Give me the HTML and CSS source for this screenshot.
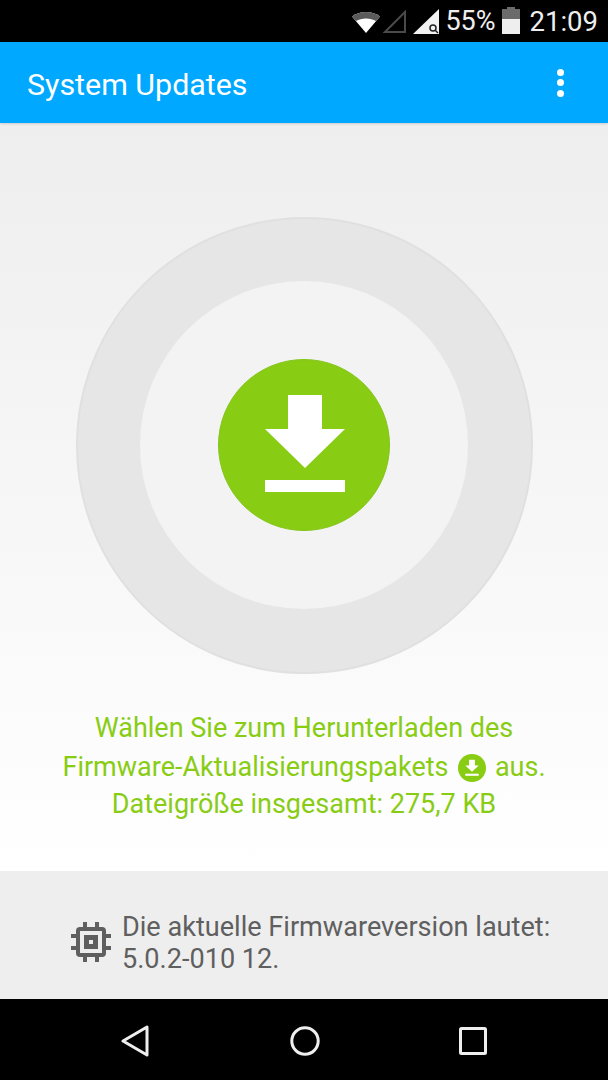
FILE: index.html
```html
<!DOCTYPE html>
<html lang="de">
<head>
<meta charset="utf-8">
<title>System Updates</title>
<link rel="stylesheet" href="styles.css">
</head>
<body>
<div class="screen">
  <header class="status">
    <svg class="ico-wifi" width="30" height="26" viewBox="0 0 30 26"><path d="M1 7.500C8 1.500 22 1.500 29 7.500L15 24Z" fill="#fff"/><path d="M1 7.500C8 1.500 22 1.500 29 7.500L25 12C19.500 8.500 10.500 8.500 5 12Z" fill="#5a5a5a"/></svg>
    <svg class="ico-sig1" width="24" height="26" viewBox="0 0 24 26"><path d="M22 3V23H2Z" fill="none" stroke="#4a4a4a" stroke-width="2"/></svg>
    <svg class="ico-sig2" width="28" height="28" viewBox="0 0 28 28"><path d="M27 1V26H1Z" fill="#f2f2f2"/><circle cx="21" cy="20" r="3" fill="none" stroke="#222" stroke-width="1.500"/><path d="M23 22L26 25" stroke="#222" stroke-width="1.500"/></svg>
    <span class="pct">55%</span>
    <svg class="ico-bat" width="18" height="27" viewBox="0 0 18 27"><path d="M5 0H13V2H18V12H0V2H5Z" fill="#6b6b6b"/><rect y="12" width="18" height="15" fill="#eee"/></svg>
    <span class="clock">21:09</span>
  </header>
  <div class="appbar">
    <h1 class="title">System Updates</h1>
    <div class="more"><i></i><i></i><i></i></div>
  </div>
  <main class="main">
    <div class="ring">
      <div class="hole">
        <div class="btn">
          <svg width="172" height="172" viewBox="0 0 172 172"><path d="M70 36H104V70H127L87 109L47 70H70Z" fill="#fff"/><rect x="47" y="121" width="80" height="12" fill="#fff"/></svg>
        </div>
      </div>
    </div>
    <p class="msg">
      <span class="line line-first">Wählen Sie zum Herunterladen des</span>
      <span class="line line-mid">Firmware-Aktualisierungspakets <svg class="mini" width="28" height="28" viewBox="0 0 172 172"><circle cx="86" cy="86" r="86" fill="#88cc14"/><path d="M68 36H104V70H127L86 109L45 70H68Z" fill="#fff"/><rect x="45" y="121" width="82" height="13" fill="#fff"/></svg> aus.</span>
      <span class="line">Dateigröße insgesamt: 275,7 KB</span>
    </p>
  </main>
  <section class="info">
    <svg class="chip" width="42" height="42" viewBox="0 0 42 42"><g fill="#5f5f5f"><rect x="13" y="1" width="4" height="40"/><rect x="25" y="1" width="4" height="40"/><rect x="1" y="13" width="40" height="4"/><rect x="1" y="25" width="40" height="4"/></g><rect x="6" y="6" width="30" height="30" rx="4" fill="#5f5f5f"/><rect x="10" y="10" width="22" height="22" fill="#eee"/><rect x="14" y="14" width="14" height="14" fill="#5f5f5f"/><rect x="19" y="19" width="4" height="4" fill="#eee"/></svg>
    <p class="ver">Die aktuelle Firmwareversion lautet:<br>5.0.2-010 12.</p>
  </section>
  <nav class="nav">
    <svg width="30" height="32" viewBox="0 0 30 32"><path d="M3 16L27 2V30Z" fill="none" stroke="#eee" stroke-width="3" stroke-linejoin="round"/></svg>
    <svg width="30" height="30" viewBox="0 0 30 30"><circle cx="15" cy="15" r="13.200" fill="none" stroke="#eee" stroke-width="3"/></svg>
    <svg width="28" height="28" viewBox="0 0 28 28"><rect x="1.500" y="1.500" width="25" height="25" rx="1" fill="none" stroke="#eee" stroke-width="3"/></svg>
  </nav>
</div>
</body>
</html>
```
FILE: styles.css
```css
* { box-sizing: border-box; }
html, body { margin: 0; padding: 0; }
body { font-family: Roboto, "Noto Sans", sans-serif; background: #000; }
.screen { width: 608px; height: 1080px; display: flex; flex-direction: column; overflow: hidden; }
.status { height: 42px; flex: none; background: #000; color: #eee; display: flex; align-items: center; justify-content: flex-end; padding-right: 10px; font-size: 27px; }
.ico-wifi { margin-right: 2px; margin-top: 2px; }
.ico-sig1 { margin-right: 5px; margin-top: 2px; }
.ico-sig2 { margin-right: 5px; margin-top: 1px; }
.pct { margin-right: 6px; }
.ico-bat { margin-right: 10px; margin-top: -2px; }
.clock { font-size: 27.500px; }
.appbar { height: 81px; flex: none; background: #00a8ff; display: flex; align-items: center; justify-content: space-between; padding: 3px 44px 0 27px; position: relative; z-index: 1; box-shadow: 0 1px 2px rgba(0,0,0,.15); }
.title { margin: 0; font-size: 30.400px; font-weight: 400; color: #fff; }
.more { display: flex; flex-direction: column; gap: 3.500px; margin-top: -3px; }
.more i { width: 7px; height: 7px; border-radius: 50%; background: #fff; display: block; }
.main { height: 748px; flex: none; background: linear-gradient(#eee, #fff); display: flex; flex-direction: column; align-items: center; padding-top: 93.500px; }
.ring { width: 457px; height: 457px; flex: none; border-radius: 50%; background: #e6e6e6; border: 2px solid #e0e0e0; display: flex; align-items: center; justify-content: center; }
.hole { width: 328px; height: 328px; flex: none; border-radius: 50%; background: #f3f3f3; display: flex; align-items: center; justify-content: center; }
.btn { width: 172px; height: 172px; flex: none; border-radius: 50%; background: #88cc14; border: 1px solid #85c51a; display: flex; align-items: center; justify-content: center; }
.btn svg { flex: none; }
.msg { margin: 35px 0 0; width: 100%; text-align: center; color: #88cc14; font-size: 27px; line-height: 38px; }
.line { display: block; }
.line-first { padding-bottom: 1px; }
.line-mid { margin-bottom: -1px; }
.mini { vertical-align: -6px; margin: 0 2.500px; }
.info { height: 128px; flex: none; background: #eee; display: flex; align-items: center; padding-left: 70px; padding-top: 15px; gap: 10px; }
.chip { flex: none; margin-top: -2px; }
.ver { margin: 0; color: #5f5f5f; font-size: 27.100px; line-height: 32px; }
.nav { flex: 1; background: #000; display: flex; align-items: center; padding: 2px 121px 0 120px; justify-content: space-between; }
```
